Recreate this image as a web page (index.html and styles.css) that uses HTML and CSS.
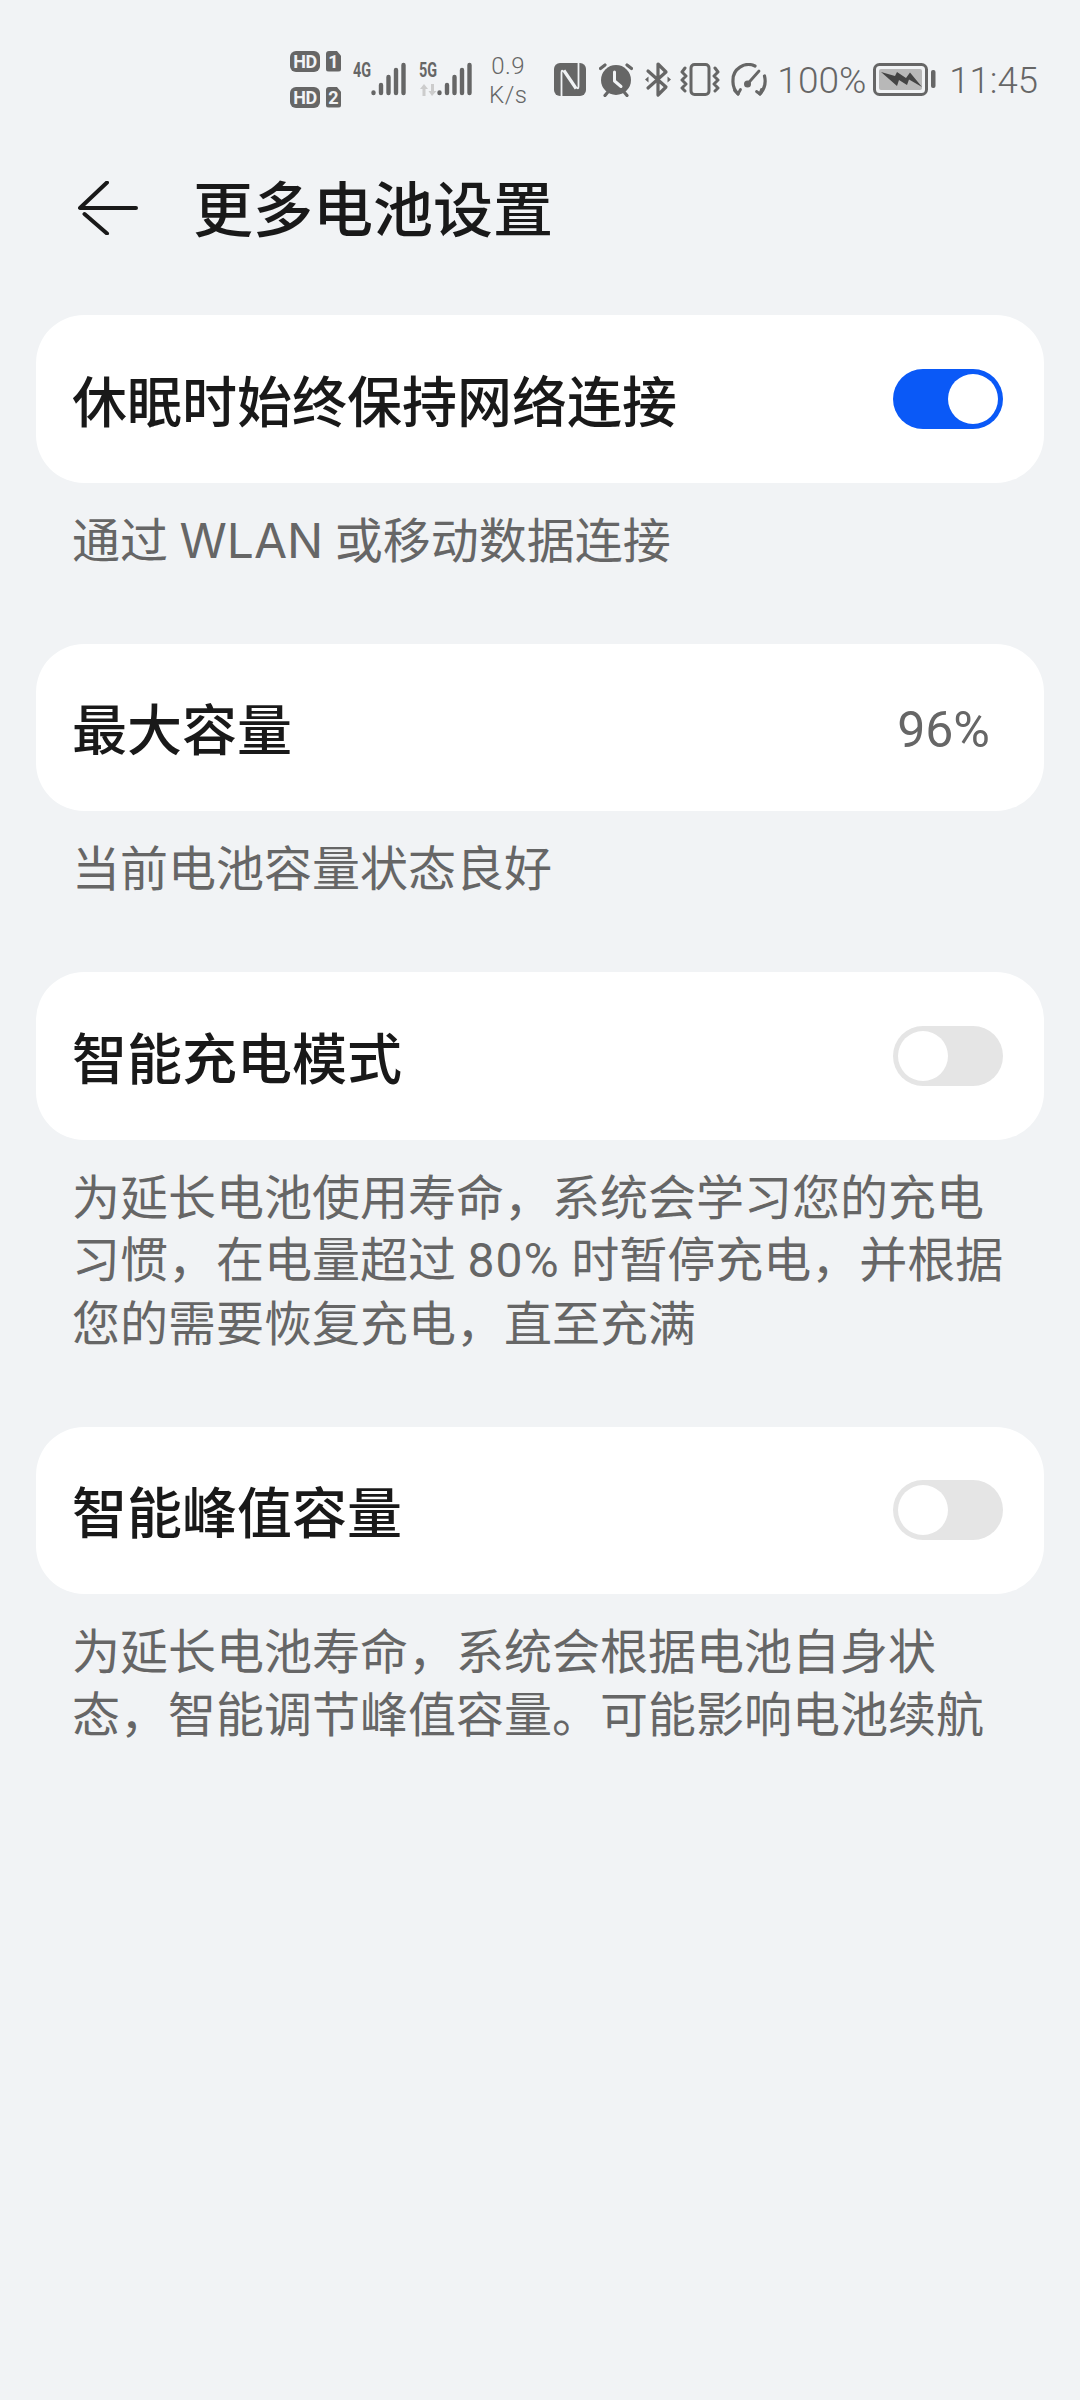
FILE: index.html
```html
<!DOCTYPE html>
<html lang="zh-CN">
<head>
<meta charset="utf-8">
<title>更多电池设置</title>
<link rel="stylesheet" href="styles.css">
</head>
<body>
<div class="status">
  <div class="sims">
    <div class="sim"><span class="hd">HD</span><span class="slot">1</span></div>
    <div class="sim"><span class="hd">HD</span><span class="slot">2</span></div>
  </div>
  <div class="net net-first">
    <span class="gen">4G</span>
    <svg class="bars" width="36" height="34" viewBox="0 0 36 34"><g stroke="#666" stroke-width="4.4" stroke-linecap="round"><path d="M2.5 30.5v.5M10 23v8M17.5 15v16M25 8v23M32.5 3v28"/></g></svg>
  </div>
  <div class="net net-second">
    <span class="gen">5G</span>
    <svg class="arrows" width="18" height="12" viewBox="0 0 18 12"><path d="M5 0L9 5H6.5V12H3.5V5H1zM13 12L9.5 7H12V0H15V7H17.5z" fill="#ccc"/></svg>
    <svg class="bars" width="36" height="34" viewBox="0 0 36 34"><g stroke="#666" stroke-width="4.4" stroke-linecap="round"><path d="M2.5 30.5v.5M10 23v8M17.5 15v16M25 8v23M32.5 3v28"/></g></svg>
  </div>
  <div class="speed"><span>0.9</span><span>K/s</span></div>
  <svg class="ic ic-nfc" width="32" height="33" viewBox="0 0 32 33"><rect width="32" height="33" rx="6" fill="#666"/><path d="M7.500 33V9.500Q7.500 6 10 9L21.500 26M24.500 0V23.500Q24.500 27 22 24L10.500 7" fill="none" stroke="#f1f3f5" stroke-width="1.800"/></svg>
  <svg class="ic ic-alarm" width="34" height="35" viewBox="0 0 34 35"><circle cx="17" cy="18" r="15" fill="#666"/><path d="M1.500 6.500L6 3M32.500 6.500L28 3M6 33.500L8.500 30.500M28 33.500L25.500 30.500" stroke="#666" stroke-width="3.200" stroke-linecap="round"/><path d="M15.500 10V19L22 24.500" fill="none" stroke="#f1f3f5" stroke-width="3" stroke-linecap="round" stroke-linejoin="round"/></svg>
  <svg class="ic ic-bt" width="26" height="37" viewBox="0 0 26 37"><path d="M3 10L21 26L13 34V3L21 11L3 27" fill="none" stroke="#666" stroke-width="3.200" stroke-linejoin="round" stroke-linecap="round"/><path d="M0 18.500L3.500 15.500V21.500zM26 18.500L22.500 15.500V21.500z" fill="#666"/></svg>
  <svg class="ic ic-vib" width="40" height="33" viewBox="0 0 40 33"><rect x="11" y="1.500" width="18" height="30" rx="3.500" fill="none" stroke="#666" stroke-width="3"/><path d="M5 5L2 9L6 13L2 17L6 21L2 25L5 28M35 5L38 9L34 13L38 17L34 21L38 25L35 28" fill="none" stroke="#666" stroke-width="3" stroke-linecap="round" stroke-linejoin="round"/></svg>
  <svg class="ic ic-gauge" width="36" height="33" viewBox="0 0 36 33"><path d="M7 31Q1.500 25 2 17.500A15.500 15.500 0 0 1 24 3M33.500 13Q36 23 29 31" fill="none" stroke="#666" stroke-width="3.200" stroke-linecap="round"/><path d="M7 31L3.500 27.500M7 31L9.500 26.500M29 31L25.500 28.500M29 31L30.500 26.500" stroke="#666" stroke-width="2.800" stroke-linecap="round"/><circle cx="16.500" cy="21" r="3.500" fill="#666"/><path d="M16.500 21L28 8" stroke="#666" stroke-width="2.800" stroke-linecap="round"/></svg>
  <span class="pct">100%</span>
  <svg class="ic-batt" width="63" height="33" viewBox="0 0 63 33"><rect x="1.500" y="1.500" width="52" height="30" rx="5" fill="none" stroke="#666" stroke-width="3"/><rect x="6" y="6" width="43" height="21" rx="2" fill="#b8b8b8"/><path d="M8 9L22 13L24 9L33 15L37 9.500L49 24L36 16.500L34 22L26 17L24 23z" fill="#444"/><rect x="58" y="7" width="4.500" height="18" rx="2" fill="#666"/></svg>
  <span class="time">11:45</span>
</div>

<header class="appbar">
  <svg class="back" width="60" height="54" viewBox="0 0 60 54"><path d="M29 1.500L2 27H58M6.500 33L29 52.500" fill="none" stroke="#191919" stroke-width="4" stroke-linecap="round" stroke-linejoin="round"/></svg>
  <h1 class="title">更多电池设置</h1>
</header>

<main class="content">
  <section class="group">
    <div class="card">
      <span class="label">休眠时始终保持网络连接</span>
      <span class="switch switch-on"><span class="knob"></span></span>
    </div>
    <p class="note">通过 WLAN 或移动数据连接</p>
  </section>
  <section class="group">
    <div class="card">
      <span class="label">最大容量</span>
      <span class="value">96%</span>
    </div>
    <p class="note">当前电池容量状态良好</p>
  </section>
  <section class="group">
    <div class="card">
      <span class="label">智能充电模式</span>
      <span class="switch"><span class="knob"></span></span>
    </div>
    <p class="note">为延长电池使用寿命，系统会学习您的充电习惯，在电量超过 <span class="num">80%</span> 时暂停充电，并根据您的需要恢复充电，直至充满</p>
  </section>
  <section class="group">
    <div class="card">
      <span class="label">智能峰值容量</span>
      <span class="switch"><span class="knob"></span></span>
    </div>
    <p class="note">为延长电池寿命，系统会根据电池自身状态，智能调节峰值容量。可能影响电池续航</p>
  </section>
</main>
</body>
</html>
```
FILE: styles.css
```css
* { box-sizing: border-box; }
html, body { margin: 0; padding: 0; }
body {
  width: 1080px;
  height: 2400px;
  overflow: hidden;
  background: #f1f3f5;
  color: #191919;
  font-family: "Noto Sans CJK SC", "Noto Sans", sans-serif;
}

/* Status bar */
.status {
  display: flex;
  align-items: center;
  height: 78px;
  margin-top: 40px;
  padding-left: 290px;
  color: #666;
  font-family: Roboto, "Liberation Sans", sans-serif;
}
.sims { display: flex; flex-direction: column; gap: 15px; }
.sim { display: flex; gap: 6px; }
.hd, .slot {
  display: flex;
  align-items: center;
  justify-content: center;
  height: 21px;
  background: #666;
  color: #f1f3f5;
  font-size: 18px;
  font-weight: 700;
}
.hd { width: 30px; border-radius: 6px; letter-spacing: -0.5px; }
.slot {
  width: 15px;
  border-radius: 3px;
  clip-path: polygon(0 0, 70% 0, 100% 25%, 100% 100%, 0 100%);
}
.net { position: relative; display: flex; align-items: flex-start; height: 34px; }
.net-first { margin-left: 12px; }
.net-second { margin-left: 12px; width: 54px; }
.gen {
  width: 18px;
  font-size: 20px;
  font-weight: 700;
  line-height: 16px;
  transform: scaleX(0.72);
  transform-origin: left center;
  white-space: nowrap;
}
.arrows { position: absolute; left: 0; bottom: 0; }
.speed {
  display: flex;
  flex-direction: column;
  align-items: center;
  margin: 3px 0 0 16px;
  font-size: 24px;
  font-weight: 300;
  line-height: 29px;
  letter-spacing: 0.5px;
}
.ic { flex: none; }
.ic-nfc { margin-left: 27px; }
.ic-alarm { margin-left: 13px; }
.ic-bt { margin-left: 12px; }
.ic-vib { margin-left: 9px; }
.ic-gauge { margin-left: 11px; }
.pct { margin: 3px 0 0 10px; font-size: 37px; font-weight: 300; }
.ic-batt { margin-left: 7px; }
.time { margin: 3px 0 0 13px; font-size: 36.500px; font-weight: 300; }

/* App bar */
.appbar {
  display: flex;
  align-items: center;
  height: 180px;
  padding-left: 78px;
}
.back { flex: none; }
.title {
  margin: 0 0 4px 55px;
  font-size: 60px;
  font-weight: 500;
  line-height: 80px;
}

/* Content */
.content { padding: 17px 36px 0; }
.group { margin-bottom: 71.500px; }
.card {
  display: flex;
  align-items: center;
  justify-content: space-between;
  height: 167.500px;
  padding: 0 41px 0 36px;
  background: #fff;
  border-radius: 48px;
}
.label { margin-bottom: 2px; font-size: 55px; font-weight: 500; line-height: 72px; }
.value {
  margin: 6px 13px 0 0;
  font-size: 50px;
  color: #666;
  font-family: Roboto, "Noto Sans", sans-serif;
}
.switch {
  display: flex;
  width: 110px;
  height: 60px;
  padding: 5px;
  background: #e5e5e5;
  border-radius: 30px;
}
.switch-on { justify-content: flex-end; background: #0a59f7; }
.knob { width: 50px; height: 50px; background: #fff; border-radius: 50%; }
.note {
  margin: 27px 36px 0;
  font-family: Inter, "Noto Sans CJK SC", sans-serif;
  font-size: 48px;
  line-height: 62.500px;
  word-spacing: -2px;
  color: #666;
}
.num { font-family: Roboto, sans-serif; letter-spacing: 1px; }
```
